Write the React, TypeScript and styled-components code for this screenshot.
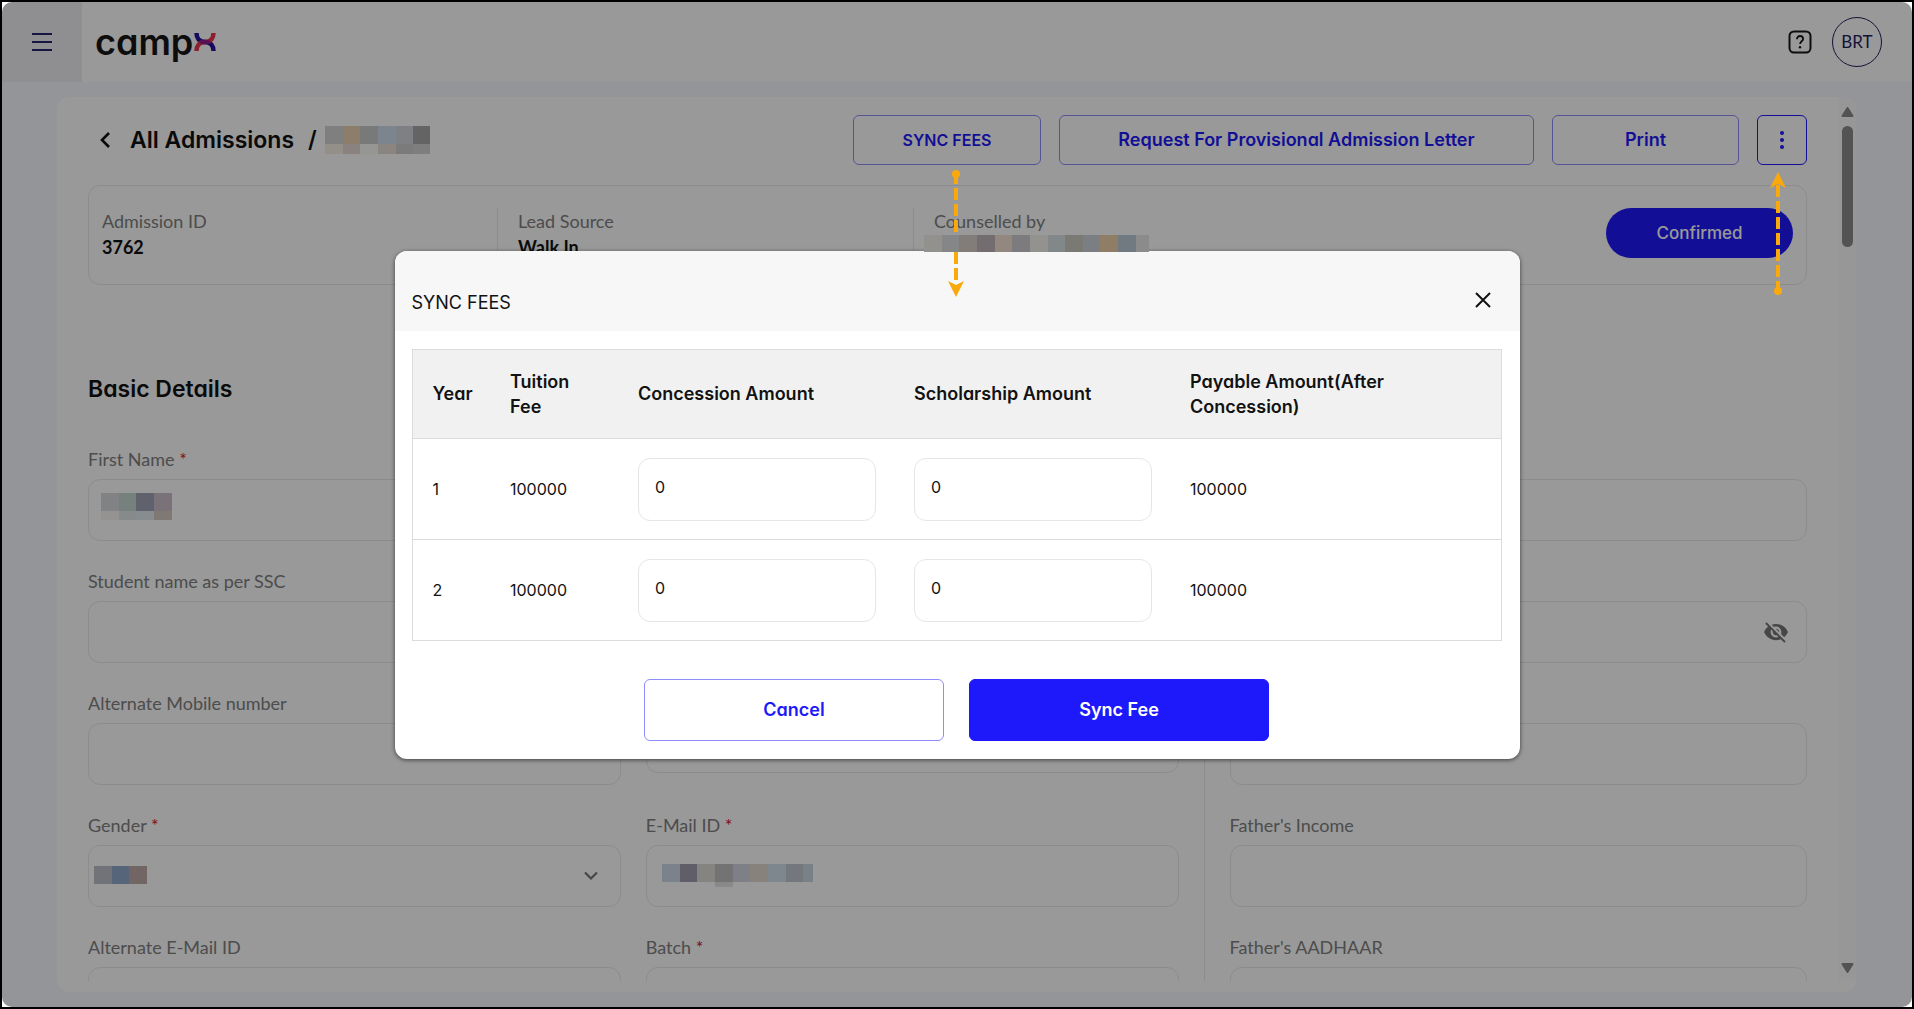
import React from "react";
import styled, { createGlobalStyle, css } from "styled-components";
import { MdVisibilityOff } from "react-icons/md";

const GlobalStyle = createGlobalStyle`
  *, *::before, *::after { box-sizing: border-box; }
  html, body, #root { height: 100%; }
  body {
    margin: 0;
    background: #fff;
    color: #121212;
    font-family: Inter, "Open Sans", sans-serif;
    font-feature-settings: "cv11";
    font-size: 16px;
    line-height: 24px;
  }
  button, input, select { font: inherit; font-feature-settings: inherit; color: inherit; }
  h1, h2, p { margin: 0; }
`;

const blue = "#1e19fa";
const line = "#e9e9e9";

const Frame = styled.div`
  height: 100vh;
  border: 2px solid #000;
`;

const Screen = styled.div`
  position: relative;
  display: flex;
  flex-direction: column;
  height: 100%;
  overflow: hidden;
  border-radius: 10px;
  background: #f5f8fd;
`;

const TopBar = styled.header`
  display: flex;
  align-items: center;
  flex: none;
  height: 80px;
  padding-right: 30px;
  background: #fff;
`;

const MenuButton = styled.button`
  display: grid;
  place-items: center;
  width: 80px;
  height: 80px;
  padding: 0;
  border: 0;
  background: #eeeef3;
`;

const Logo = styled.a`
  display: flex;
  align-items: center;
  gap: 1px;
  margin-left: 13px;
  color: #161616;
  font-size: 36px;
  font-weight: 600;
  line-height: 40px;
  text-decoration: none;
`;

const HelpButton = styled.button`
  display: grid;
  place-items: center;
  margin-left: auto;
  padding: 0;
  border: 0;
  background: none;
`;

const Avatar = styled.button`
  width: 50px;
  height: 50px;
  margin-left: 20px;
  padding: 0;
  border: 1px solid #211f5c;
  border-radius: 50%;
  background: none;
  color: #211f5c;
  font-family: Lato, sans-serif;
  font-size: 17px;
`;

const Card = styled.main`
  display: flex;
  flex: 1;
  min-height: 0;
  margin: 15px 56px 15px 55px;
  padding-bottom: 11px;
  overflow: hidden;
  border-radius: 12px;
  background: #fff;
`;

const Content = styled.div`
  flex: 1;
  min-width: 0;
  overflow: hidden;
  padding: 18px 31px 0;
`;

const ScrollTrack = styled.div`
  display: flex;
  flex-direction: column;
  align-items: center;
  width: 18px;
  padding: 10px 0 8px;
  background: #fcfcfc;
`;

const ScrollThumb = styled.div`
  width: 11px;
  height: 121px;
  margin: 9px 0 auto;
  border-radius: 6px;
  background: #8a8a8a;
`;

const TitleRow = styled.div`
  display: flex;
  align-items: center;
  gap: 18px;
  height: 50px;
`;

const Crumbs = styled.div`
  display: flex;
  align-items: center;
  margin-right: auto;
  padding-left: 11px;
`;

const BackLink = styled.a`
  display: flex;
  align-items: center;
  gap: 19px;
  color: inherit;
  text-decoration: none;
`;

const headingText = css`
  font-size: 23px;
  font-weight: 600;
  line-height: 36px;
`;

const PageTitle = styled.h1`
  ${headingText}
`;

const Slash = styled.span`
  ${headingText}
  margin: 0 8px 0 14px;
`;

const Anchor = styled.div`
  position: relative;
`;

const ActionButton = styled.button<{ $width: number; $strong?: boolean; $caps?: boolean }>`
  display: grid;
  place-items: center;
  width: ${(p) => p.$width}px;
  height: 50px;
  padding: 0;
  border: 1px solid ${(p) => (p.$strong ? blue : "#8f8cfc")};
  border-radius: 6px;
  background: none;
  color: ${blue};
  font-size: ${(p) => (p.$caps ? 16 : 18)}px;
  font-weight: 600;
`;

const DownArrow = styled.svg`
  position: absolute;
  z-index: 30;
  top: 54px;
  left: 93px;
`;

const UpArrow = styled.svg`
  position: absolute;
  z-index: 30;
  top: 57px;
  left: 11px;
`;

const InfoCard = styled.section`
  display: flex;
  align-items: flex-start;
  margin-top: 20px;
  padding: 22px 13px 24px;
  border: 1px solid ${line};
  border-radius: 12px;
`;

const InfoCell = styled.div<{ $first?: boolean }>`
  width: ${(p) => (p.$first ? 395 : 416)}px;
  padding-left: ${(p) => (p.$first ? 0 : 20)}px;
  border-left: ${(p) => (p.$first ? "0" : `1px solid ${line}`)};
  line-height: 26px;
`;

const labelText = css`
  color: #808080;
  font-family: Lato, sans-serif;
  font-size: 18px;
`;

const InfoLabel = styled.div`
  ${labelText}
`;

const InfoValue = styled.div`
  font-family: Lato, sans-serif;
  font-size: 18px;
  font-weight: 700;
`;

const Status = styled.button`
  width: 187px;
  height: 50px;
  margin-left: auto;
  padding: 0;
  border: 0;
  border-radius: 25px;
  background: ${blue};
  color: #fff;
  font-size: 17px;
  font-weight: 500;
`;

const SectionTitle = styled.h2`
  ${headingText}
  margin: 86px 0 40px;
`;

const FormGrid = styled.form`
  display: grid;
  grid-template-columns: 17fr 9fr;
  column-gap: 51px;
`;

const FieldGroup = styled.div<{ $cols: number; $divided?: boolean }>`
  position: relative;
  display: grid;
  grid-template-columns: repeat(${(p) => p.$cols}, 1fr);
  grid-auto-rows: 94px;
  gap: 28px 25px;

  &::after {
    content: "";
    display: ${(p) => (p.$divided ? "block" : "none")};
    position: absolute;
    top: 0;
    bottom: 0;
    right: -26px;
    width: 1px;
    background: ${line};
  }
`;

const Field = styled.div`
  display: flex;
  flex-direction: column;
  gap: 8px;
`;

const FieldLabel = styled.label`
  ${labelText}
`;

const Required = styled.span`
  color: #d2122e;
`;

const ControlBox = styled.div<{ $short?: boolean }>`
  display: flex;
  align-items: center;
  height: ${(p) => (p.$short ? 50 : 62)}px;
  border: 1px solid ${line};
  border-radius: 12px;
`;

const controlReset = css`
  flex: 1;
  min-width: 0;
  height: 100%;
  padding: 0 16px;
  border: 0;
  outline: 0;
  background: none;
  appearance: none;
`;

const TextControl = styled.input`
  ${controlReset}
`;

const SelectControl = styled.select`
  ${controlReset}
`;

const Adornment = styled.span<{ $right: number }>`
  display: flex;
  margin-right: ${(p) => p.$right}px;
  color: #757575;
`;

const MaskGrid = styled.span<{ $cols: number }>`
  position: relative;
  z-index: 30;
  display: inline-grid;
  flex: none;
  grid-template-columns: repeat(${(p) => p.$cols}, auto);
  line-height: 0;
`;

const MaskCell = styled.span<{ $w: number; $h: number; $color: string }>`
  width: ${(p) => p.$w}px;
  height: ${(p) => p.$h}px;
  background: ${(p) => p.$color};
`;

const MaskSlot = styled.span<{ $left: number; $lift: number }>`
  display: flex;
  margin-left: ${(p) => p.$left}px;
  padding-bottom: ${(p) => p.$lift}px;
`;

const CounselMask = styled.div`
  display: flex;
  margin-left: -10px;
  padding-top: 1px;
`;

const Backdrop = styled.div`
  position: absolute;
  z-index: 20;
  inset: 0;
  display: grid;
  place-items: center;
  background: rgba(0, 0, 0, 0.4);
`;

const Dialog = styled.div`
  width: 100%;
  max-width: 1125px;
  overflow: hidden;
  border-radius: 12px;
  background: #fff;
  box-shadow: 0 1px 4px rgba(0, 0, 0, 0.6);
`;

const DialogHeader = styled.div`
  display: flex;
  align-items: center;
  justify-content: space-between;
  height: 80px;
  padding: 18px 24px 0 17px;
  background: #f7f7f7;
`;

const DialogTitle = styled.h2`
  padding-top: 6px;
  font-size: 18px;
  font-weight: 400;
`;

const CloseButton = styled.button`
  display: grid;
  place-items: center;
  width: 26px;
  height: 26px;
  padding: 0;
  border: 0;
  background: none;
`;

const DialogBody = styled.div`
  padding: 18px 18px 18px 17px;
`;

const FeeTable = styled.table`
  width: 100%;
  border: 1px solid #dcdcdc;
  border-collapse: collapse;
  table-layout: fixed;
`;

const Col = styled.col<{ $w?: number }>`
  width: ${(p) => (p.$w ? `${p.$w}px` : "auto")};
`;

const Th = styled.th`
  padding: 19px 18px 19px 20px;
  border-bottom: 1px solid #dcdcdc;
  background: #f1f1f1;
  font-size: 18px;
  font-weight: 600;
  line-height: 25px;
  text-align: left;
`;

const Td = styled.td`
  padding: 19px 18px 18px 20px;
  border-bottom: 1px solid #dcdcdc;
`;

const AmountInput = styled.input`
  display: block;
  width: 238px;
  max-width: 100%;
  height: 63px;
  padding: 0 16px 4px;
  border: 1px solid #e6e6e6;
  border-radius: 12px;
  background: #fff;
`;

const DialogActions = styled.div`
  display: flex;
  justify-content: center;
  gap: 25px;
  padding-top: 38px;
`;

const DialogButton = styled.button<{ $primary?: boolean }>`
  width: 300px;
  height: 62px;
  padding: 0;
  border: 1px solid ${(p) => (p.$primary ? blue : "#8f8cfc")};
  border-radius: 6px;
  background: ${(p) => (p.$primary ? blue : "#fff")};
  color: ${(p) => (p.$primary ? "#fff" : blue)};
  font-size: 18px;
  font-weight: 600;
`;

type MaskProps = { widths: number[]; rows: { h: number; colors: string[] }[] };

function Mask({ widths, rows }: MaskProps) {
  return (
    <MaskGrid $cols={widths.length} aria-hidden="true">
      {rows.map((row, r) =>
        widths.map((w, c) => (
          <MaskCell key={`${r}-${c}`} $w={w} $h={row.h} $color={row.colors[c]} />
        ))
      )}
    </MaskGrid>
  );
}

const none = "transparent";

const nameMask: MaskProps = {
  widths: [18, 17, 18, 18, 17, 17],
  rows: [
    { h: 18, colors: ["#7f7f7f", "#8d7e6b", "#777a79", "#7c848e", "#7f8083", "#646464"] },
    { h: 10, colors: ["#948f89", "#89827e", "#969795", "#8b8582", "#7b7b7b", "#7e7e7e"] },
  ],
};

const firstNameMask: MaskProps = {
  widths: [18, 17, 18, 18],
  rows: [
    { h: 18, colors: ["#808284", "#76807d", "#5f626c", "#797379"] },
    { h: 9, colors: ["#959391", "#868a8a", "#868c90", "#807873"] },
  ],
};

const genderMask: MaskProps = {
  widths: [18, 17, 18],
  rows: [{ h: 18, colors: ["#727379", "#566579", "#716663"] }],
};

const emailMask: MaskProps = {
  widths: [18, 17, 18, 18, 17, 18, 18, 17, 10],
  rows: [
    {
      h: 18,
      colors: ["#7c828b", "#605e69", "#868481", "#737373", "#7e7f87", "#87837c", "#7e878e", "#74777b", "#788286"],
    },
    { h: 5, colors: [none, none, none, "#898989", none, none, none, none, none] },
  ],
};

const counsellorMask: MaskProps = {
  widths: [18, 17, 18, 18, 17, 18, 18, 17, 18, 17, 18, 18, 13],
  rows: [
    {
      h: 17,
      colors: [
        "#92918d", "#848688", "#827d79", "#746d70", "#928880", "#7c7c7f", "#94928f",
        "#82878a", "#7b7973", "#7b7e83", "#907d66", "#727a81", "#8b8b8b",
      ],
    },
  ],
};

type FieldSpec = {
  id: string;
  label: string;
  required?: boolean;
  kind?: "select" | "short" | "secret";
  mask?: MaskProps;
  maskLeft?: number;
  maskLift?: number;
};

const studentFields: FieldSpec[] = [
  { id: "first-name", label: "First Name", required: true, mask: firstNameMask, maskLeft: 12, maskLift: 8 },
  { id: "last-name", label: "Last Name" },
  { id: "ssc-name", label: "Student name as per SSC" },
  { id: "mobile", label: "Mobile number" },
  { id: "alt-mobile", label: "Alternate Mobile number" },
  { id: "birth-date", label: "Date of Birth", kind: "short" },
  { id: "gender", label: "Gender", required: true, kind: "select", mask: genderMask, maskLeft: 5, maskLift: 2 },
  { id: "email", label: "E-Mail ID", required: true, mask: emailMask, maskLeft: 15, maskLift: 2 },
  { id: "alt-email", label: "Alternate E-Mail ID" },
  { id: "batch", label: "Batch", required: true },
];

const parentFields: FieldSpec[] = [
  { id: "father-name", label: "Father's Name" },
  { id: "father-mobile", label: "Father's Mobile", kind: "secret" },
  { id: "father-job", label: "Father's Occupation" },
  { id: "father-income", label: "Father's Income" },
  { id: "father-aadhaar", label: "Father's AADHAAR" },
];

function FormField({ id, label, required, kind, mask, maskLeft = 0, maskLift = 0 }: FieldSpec) {
  return (
    <Field>
      <FieldLabel htmlFor={id}>
        {label}
        {required && <Required> *</Required>}
      </FieldLabel>
      <ControlBox $short={kind === "short"}>
        {mask && (
          <MaskSlot $left={maskLeft} $lift={maskLift}>
            <Mask {...mask} />
          </MaskSlot>
        )}
        {kind === "select" ? <SelectControl id={id} /> : <TextControl id={id} type="text" />}
        {kind === "select" && (
          <Adornment $right={22}>
            <svg width="14" height="10" viewBox="0 0 14 10" fill="none" aria-hidden="true">
              <path d="M1 1.5l6 6 6-6" stroke="currentColor" strokeWidth="2.2" />
            </svg>
          </Adornment>
        )}
        {kind === "secret" && (
          <Adornment $right={17}>
            <MdVisibilityOff size={26} />
          </Adornment>
        )}
      </ControlBox>
    </Field>
  );
}

function ScrollArrow({ down }: { down?: boolean }) {
  return (
    <svg width="13" height="10" viewBox="0 0 13 10" aria-hidden="true">
      <path
        d={down ? "M1.5 1h10L6.5 9z" : "M1.5 9h10L6.5 1z"}
        fill="#8a8a8a"
        stroke="#8a8a8a"
        strokeWidth="2"
        strokeLinejoin="round"
      />
    </svg>
  );
}

const years = [1, 2];

export default function App() {
  return (
    <>
      <GlobalStyle />
      <Frame>
        <Screen>
          <TopBar>
            <MenuButton aria-label="Menu">
              <svg width="20" height="18" viewBox="0 0 20 18" aria-hidden="true">
                <path d="M0 1h20M0 9h20M0 17h20" stroke="#28256c" strokeWidth="2" />
              </svg>
            </MenuButton>
            <Logo href="#" aria-label="campx">
              camp
              <svg width="22" height="18" viewBox="0 0 22 18" fill="none" aria-hidden="true">
                <path d="M2.500 0C2.500 5 5 9 11 9s8.500 4 8.500 9" stroke="#2312a0" strokeWidth="4.500" />
                <path d="M19.500 0C19.500 5 17 9 11 9S2.500 13 2.500 18" stroke="#e8384f" strokeWidth="4.500" />
                <ellipse cx="11" cy="9" rx="5.500" ry="2.300" fill="#8f1f87" />
              </svg>
            </Logo>
            <HelpButton aria-label="Help">
              <svg width="24" height="24" viewBox="0 0 24 24" fill="none" aria-hidden="true">
                <rect x="1.500" y="1.500" width="21" height="21" rx="4.500" stroke="#161616" strokeWidth="2" />
                <path
                  d="M9 9.200c0-1.900 1.300-3.200 3.100-3.200s3 1.200 3 2.900c0 2.300-3 2.500-3 5.100"
                  stroke="#161616"
                  strokeWidth="1.800"
                />
                <circle cx="12" cy="17.200" r="1.200" fill="#161616" />
              </svg>
            </HelpButton>
            <Avatar>BRT</Avatar>
          </TopBar>

          <Card>
            <Content>
              <TitleRow>
                <Crumbs>
                  <BackLink href="#">
                    <svg width="12" height="18" viewBox="0 0 12 18" fill="none" aria-hidden="true">
                      <path d="M10 2L3 9l7 7" stroke="#121212" strokeWidth="2.600" />
                    </svg>
                    <PageTitle>All Admissions</PageTitle>
                  </BackLink>
                  <Slash>/</Slash>
                  <Mask {...nameMask} />
                </Crumbs>
                <Anchor>
                  <ActionButton $width={188} $caps>
                    SYNC FEES
                  </ActionButton>
                  <DownArrow width="20" height="130" viewBox="0 0 20 130" aria-hidden="true">
                    <circle cx="10" cy="5" r="4" fill="#f9a90c" />
                    <path d="M10 3v109" stroke="#f9a90c" strokeWidth="4" strokeDasharray="12 4" />
                    <path d="M2 112l8 4 8-4-8 16z" fill="#f9a90c" />
                  </DownArrow>
                </Anchor>
                <ActionButton $width={475}>Request For Provisional Admission Letter</ActionButton>
                <ActionButton $width={187}>Print</ActionButton>
                <Anchor>
                  <ActionButton $width={50} $strong aria-label="More actions">
                    <svg width="4" height="18" viewBox="0 0 4 18" fill={blue} aria-hidden="true">
                      <circle cx="2" cy="2" r="2" />
                      <circle cx="2" cy="9" r="2" />
                      <circle cx="2" cy="16" r="2" />
                    </svg>
                  </ActionButton>
                  <UpArrow width="20" height="124" viewBox="0 0 20 124" aria-hidden="true">
                    <path d="M2 16l8-4 8 4-8-16z" fill="#f9a90c" />
                    <path d="M10 13v106" stroke="#f9a90c" strokeWidth="4" strokeDasharray="12 4" />
                    <circle cx="10" cy="119" r="4" fill="#f9a90c" />
                  </UpArrow>
                </Anchor>
              </TitleRow>

              <InfoCard>
                <InfoCell $first>
                  <InfoLabel>Admission ID</InfoLabel>
                  <InfoValue>3762</InfoValue>
                </InfoCell>
                <InfoCell>
                  <InfoLabel>Lead Source</InfoLabel>
                  <InfoValue>Walk In</InfoValue>
                </InfoCell>
                <InfoCell>
                  <InfoLabel>Counselled by</InfoLabel>
                  <CounselMask>
                    <Mask {...counsellorMask} />
                  </CounselMask>
                </InfoCell>
                <Status>Confirmed</Status>
              </InfoCard>

              <SectionTitle>Basic Details</SectionTitle>

              <FormGrid>
                <FieldGroup $cols={2} $divided>
                  {studentFields.map((f) => (
                    <FormField key={f.id} {...f} />
                  ))}
                </FieldGroup>
                <FieldGroup $cols={1}>
                  {parentFields.map((f) => (
                    <FormField key={f.id} {...f} />
                  ))}
                </FieldGroup>
              </FormGrid>
            </Content>
            <ScrollTrack>
              <ScrollArrow />
              <ScrollThumb />
              <ScrollArrow down />
            </ScrollTrack>
          </Card>

          <Backdrop>
            <Dialog role="dialog" aria-modal="true" aria-labelledby="sync-title">
              <DialogHeader>
                <DialogTitle id="sync-title">SYNC FEES</DialogTitle>
                <CloseButton aria-label="Close">
                  <svg width="16" height="16" viewBox="0 0 16 16" aria-hidden="true">
                    <path d="M1 1l14 14M15 1L1 15" stroke="#121212" strokeWidth="2" />
                  </svg>
                </CloseButton>
              </DialogHeader>
              <DialogBody>
                <FeeTable>
                  <colgroup>
                    <Col $w={78} />
                    <Col $w={128} />
                    <Col $w={276} />
                    <Col $w={276} />
                    <Col />
                  </colgroup>
                  <thead>
                    <tr>
                      <Th>Year</Th>
                      <Th>
                        Tuition
                        <br />
                        Fee
                      </Th>
                      <Th>Concession Amount</Th>
                      <Th>Scholarship Amount</Th>
                      <Th>
                        Payable Amount(After
                        <br />
                        Concession)
                      </Th>
                    </tr>
                  </thead>
                  <tbody>
                    {years.map((year) => (
                      <tr key={year}>
                        <Td>{year}</Td>
                        <Td>100000</Td>
                        <Td>
                          <AmountInput aria-label={`Concession amount, year ${year}`} defaultValue="0" />
                        </Td>
                        <Td>
                          <AmountInput aria-label={`Scholarship amount, year ${year}`} defaultValue="0" />
                        </Td>
                        <Td>100000</Td>
                      </tr>
                    ))}
                  </tbody>
                </FeeTable>
                <DialogActions>
                  <DialogButton>Cancel</DialogButton>
                  <DialogButton $primary>Sync Fee</DialogButton>
                </DialogActions>
              </DialogBody>
            </Dialog>
          </Backdrop>
        </Screen>
      </Frame>
    </>
  );
}
